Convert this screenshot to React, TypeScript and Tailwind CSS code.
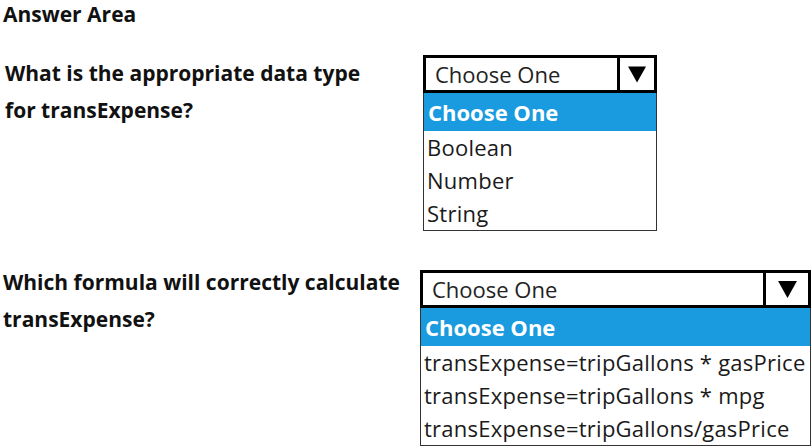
const Triangle = ({ w, h }: { w: number; h: number }) => (
  <svg width={w} height={h} viewBox="0 0 20 18">
    <path d="M0 0h20L10 18z" fill="#000" />
  </svg>
);

interface SelectProps {
  width: number;
  arrowWidth: number;
  options: string[];
  triW: number;
  triH: number;
}

const FakeSelect = ({ width, arrowWidth, options, triW, triH }: SelectProps) => (
  <div style={{ width }} className="flex flex-col">
    <div className="flex h-[38px] border-[3px] border-black bg-white">
      <div className="flex-1 flex items-center pl-[9px] text-[22px] text-[#222]">Choose One</div>
      <div style={{ width: arrowWidth }} className="border-l-[3px] border-black flex items-center justify-center">
        <Triangle w={triW} h={triH} />
      </div>
    </div>
    <div className="border border-t-0 border-[#333] bg-white">
      <div className="h-[38px] bg-[#1a9be0] text-white font-bold text-[22px] flex items-center pl-[4px]">
        Choose One
      </div>
      {options.map((o) => (
        <div key={o} className="h-[33px] flex items-center pl-[3px] text-[22px] tracking-[0.25px] text-[#1a1a1a] whitespace-nowrap">
          {o}
        </div>
      ))}
    </div>
  </div>
);

export default function App() {
  return (
    <div className="w-[811px] h-[448px] bg-white overflow-hidden font-['Open_Sans',sans-serif] text-[#111]">
      <div className="pl-[3px] text-[21px] font-bold leading-[29px]">Answer Area</div>

      <div className="flex mt-[26px]">
        <div className="w-[423px] pl-[5px] text-[21px] font-bold leading-[37px]">
          <div>What is the appropriate data type</div>
          <div>for transExpense?</div>
        </div>
        <FakeSelect
          width={234}
          arrowWidth={37}
          triW={18}
          triH={17}
          options={['Boolean', 'Number', 'String']}
        />
      </div>

      <div className="flex mt-[39px]">
        <div className="w-[420px] pl-[3px] text-[21px] font-bold leading-[37px] -mt-[6px]">
          <div className="whitespace-nowrap">Which formula will correctly calculate</div>
          <div>transExpense?</div>
        </div>
        <FakeSelect
          width={391}
          arrowWidth={45}
          triW={25}
          triH={17}
          options={[
            'transExpense=tripGallons * gasPrice',
            'transExpense=tripGallons * mpg',
            'transExpense=tripGallons/gasPrice',
          ]}
        />
      </div>
    </div>
  );
}
